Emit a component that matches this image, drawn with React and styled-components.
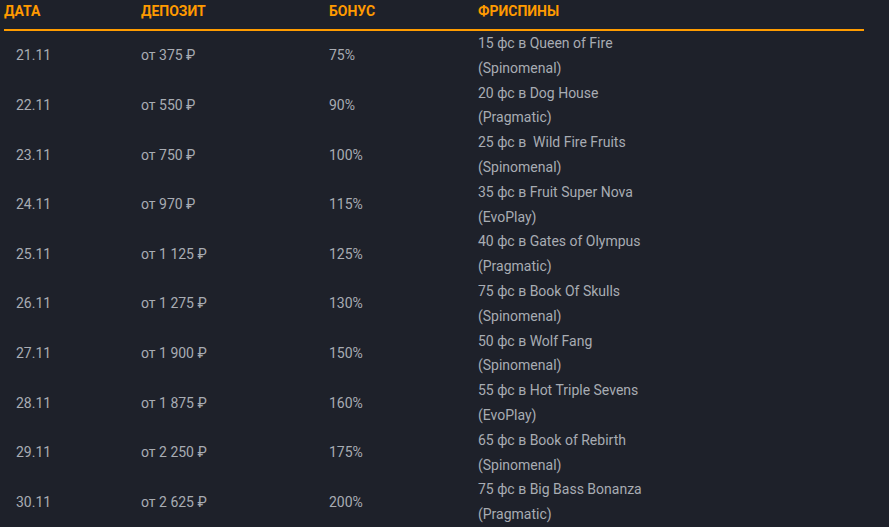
import React from 'react';
import styled, { createGlobalStyle } from 'styled-components';

const Global = createGlobalStyle`
  html, body {
    margin: 0;
    padding: 0;
    background: #1e212a;
  }
  body {
    font-family: Roboto, "Noto Sans", sans-serif;
  }
`;

const Page = styled.div`
  width: 889px;
  height: 527px;
  overflow: hidden;
  background: #1e212a;
  padding: 0 25px 0 4px;
  box-sizing: border-box;
`;

const Table = styled.div`
  width: 860px;
`;

const Row = styled.div`
  display: grid;
  grid-template-columns: 137px 188px 149px 1fr;
  align-items: center;
  height: ${p => (p.$head ? '29px' : '49.6px')};
  border-bottom: ${p => (p.$head ? '2px solid #ff9c00' : 'none')};
`;

const HeadCell = styled.div`
  color: #ff9a00;
  font-size: 14px;
  font-weight: 700;
  text-transform: uppercase;
  line-height: 20px;
  padding-bottom: 8px;
`;

const Cell = styled.div`
  color: #a8acb3;
  font-size: 14px;
  line-height: 24.8px;
  white-space: pre;
  padding-left: ${p => p.$pad || 0}px;
`;

const rows = [
  ['21.11', 'от 375 ₽', '75%', '15 фс в Queen of Fire', '(Spinomenal)'],
  ['22.11', 'от 550 ₽', '90%', '20 фс в Dog House', '(Pragmatic)'],
  ['23.11', 'от 750 ₽', '100%', '25 фс в  Wild Fire Fruits', '(Spinomenal)'],
  ['24.11', 'от 970 ₽', '115%', '35 фс в Fruit Super Nova', '(EvoPlay)'],
  ['25.11', 'от 1 125 ₽', '125%', '40 фс в Gates of Olympus', '(Pragmatic)'],
  ['26.11', 'от 1 275 ₽', '130%', '75 фс в Book Of Skulls', '(Spinomenal)'],
  ['27.11', 'от 1 900 ₽', '150%', '50 фс в Wolf Fang', '(Spinomenal)'],
  ['28.11', 'от 1 875 ₽', '160%', '55 фс в Hot Triple Sevens', '(EvoPlay)'],
  ['29.11', 'от 2 250 ₽', '175%', '65 фс в Book of Rebirth', '(Spinomenal)'],
  ['30.11', 'от 2 625 ₽', '200%', '75 фс в Big Bass Bonanza', '(Pragmatic)'],
];

export default function App() {
  return (
    <Page>
      <Global />
      <Table>
        <Row $head>
          <HeadCell>Дата</HeadCell>
          <HeadCell>Депозит</HeadCell>
          <HeadCell>Бонус</HeadCell>
          <HeadCell>Фриспины</HeadCell>
        </Row>
        {rows.map(([date, dep, bonus, fs, prov]) => (
          <Row key={date}>
            <Cell $pad={12}>{date}</Cell>
            <Cell>{dep}</Cell>
            <Cell>{bonus}</Cell>
            <Cell>
              {fs}
              <br />
              {prov}
            </Cell>
          </Row>
        ))}
      </Table>
    </Page>
  );
}
